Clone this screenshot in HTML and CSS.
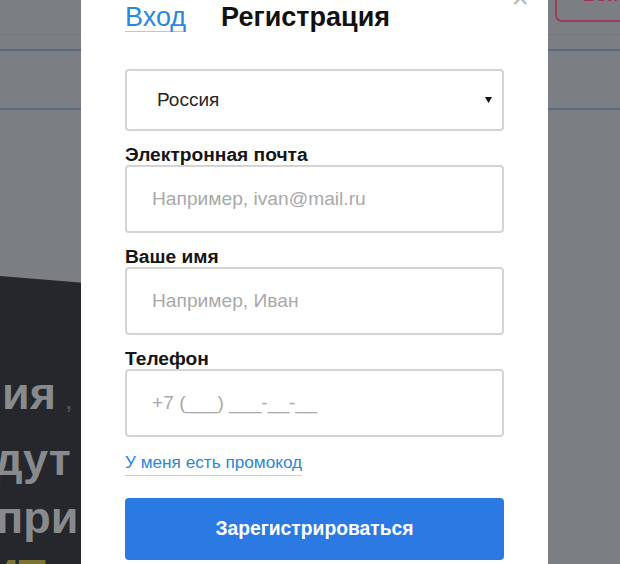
FILE: index.html
```html
<!DOCTYPE html>
<html lang="ru">
<head>
<meta charset="utf-8">
<title>Регистрация</title>
<link rel="stylesheet" href="styles.css">
</head>
<body>
<div class="page">
  <header class="topbar">
    <div class="login-btn">Войти</div>
  </header>
  <nav class="nav"></nav>
  <section class="hero">
    <div class="hero-text">
      <div class="hl l1">ия<span class="comma">,</span></div>
      <div class="hl l2">дут</div>
      <div class="hl l3">при</div>
      <div class="hl l4">ИТ</div>
    </div>
  </section>
</div>

<div class="modal">
  <span class="close">×</span>
  <div class="tabs">
    <span class="tab tab-login">Вход</span>
    <span class="tab tab-reg">Регистрация</span>
  </div>

  <div class="select">
    <span class="select-value">Россия</span>
    <svg class="select-arrow" width="7" height="6" viewBox="0 0 7 6"><path d="M0 0h7L3.5 6z" fill="#111"/></svg>
  </div>

  <label class="label">Электронная почта</label>
  <input class="field" type="text" placeholder="Например, ivan@mail.ru">

  <label class="label">Ваше имя</label>
  <input class="field" type="text" placeholder="Например, Иван">

  <label class="label">Телефон</label>
  <input class="field" type="text" placeholder="+7 (___) ___-__-__">

  <div class="promo-row"><a class="promo">У меня есть промокод</a></div>

  <button class="submit">Зарегистрироваться</button>
</div>
</body>
</html>
```

FILE: styles.css
```css
* { box-sizing: border-box; }

html, body {
  margin: 0;
  padding: 0;
  width: 620px;
  height: 564px;
  overflow: hidden;
}

body {
  background: #7b7e83;
  font-family: "Liberation Sans", Arial, sans-serif;
  position: relative;
}

.page {
  width: 620px;
}

.topbar {
  height: 35px;
  border-bottom: 1px solid #73767b;
  display: flex;
  justify-content: flex-end;
}

.login-btn {
  margin-top: -20px;
  margin-right: -40px;
  width: 105px;
  height: 42px;
  border: 2px solid #9a3f58;
  border-radius: 7px;
  color: #a3304e;
  font-weight: bold;
  font-size: 18px;
  line-height: 20px;
  padding: 3px 0 0 26px;
}

.nav {
  margin-top: 14px;
  height: 61px;
  border-top: 2px solid #5a6a80;
  border-bottom: 2px solid #5a6a80;
}

.hero {
  margin-top: 163px;
  width: 110px;
  height: 320px;
  background: #25272c;
  clip-path: polygon(0 3px, 100% 12px, 100% 100%, 0 100%);
}

.hero-text {
  padding-top: 92px;
}

.hl {
  font-size: 45px;
  font-weight: bold;
  line-height: 58px;
  color: #898a8e;
  white-space: nowrap;
}

.l1 { margin-left: 2px; }
.l2 { margin-left: -6px; }
.l3 { margin-left: -4px; }
.l4 { margin-left: -14px; color: #7c7434; }

.comma {
  margin-left: 10px;
  font-size: 20px;
  color: #55565a;
}

.modal {
  position: absolute;
  left: 81px;
  top: 0;
  width: 467px;
  height: 564px;
  background: #fff;
  padding: 4px 44px 0 44px;
}

.close {
  position: absolute;
  top: -17px;
  right: 19px;
  font-size: 30px;
  line-height: 30px;
  color: #b9b9b9;
}

.tabs {
  display: flex;
  gap: 35px;
  align-items: flex-start;
}

.tab {
  font-size: 27px;
  line-height: 27px;
}

.tab-login {
  color: #2b88dc;
  border-bottom: 1px solid #a9cdee;
}

.tab-reg {
  color: #111;
  font-weight: bold;
}

.select {
  margin-top: 37px;
  height: 62px;
  border: 2px solid #d4d4d4;
  border-radius: 4px;
  display: flex;
  align-items: center;
  justify-content: space-between;
  padding: 0 10px 0 30px;
}

.select-value {
  font-size: 19px;
  color: #262626;
}

.select-arrow {
  display: block;
}

.label {
  display: block;
  margin-top: 14px;
  font-size: 19.2px;
  line-height: 20px;
  font-weight: bold;
  color: #151515;
}

.field {
  display: block;
  width: 100%;
  height: 68px;
  margin: 0;
  border: 2px solid #d4d4d4;
  border-radius: 4px;
  padding: 0 0 0 25px;
  font-family: "Liberation Sans", Arial, sans-serif;
  font-size: 19.2px;
  color: #222;
  outline: none;
  background: #fff;
}

.field::placeholder {
  color: #a9a9a9;
}

.promo-row {
  margin-top: 15px;
}

.promo {
  display: inline-block;
  font-size: 17.2px;
  line-height: 20px;
  color: #2a86d8;
  padding-bottom: 3px;
  border-bottom: 1px solid #b9d7f1;
}

.submit {
  display: block;
  margin-top: 22px;
  width: 100%;
  height: 62px;
  border: none;
  border-radius: 4px;
  background: #2b79e3;
  color: #fff;
  font-family: "Liberation Sans", Arial, sans-serif;
  font-weight: bold;
  font-size: 19.3px;
  padding: 0;
}
```
